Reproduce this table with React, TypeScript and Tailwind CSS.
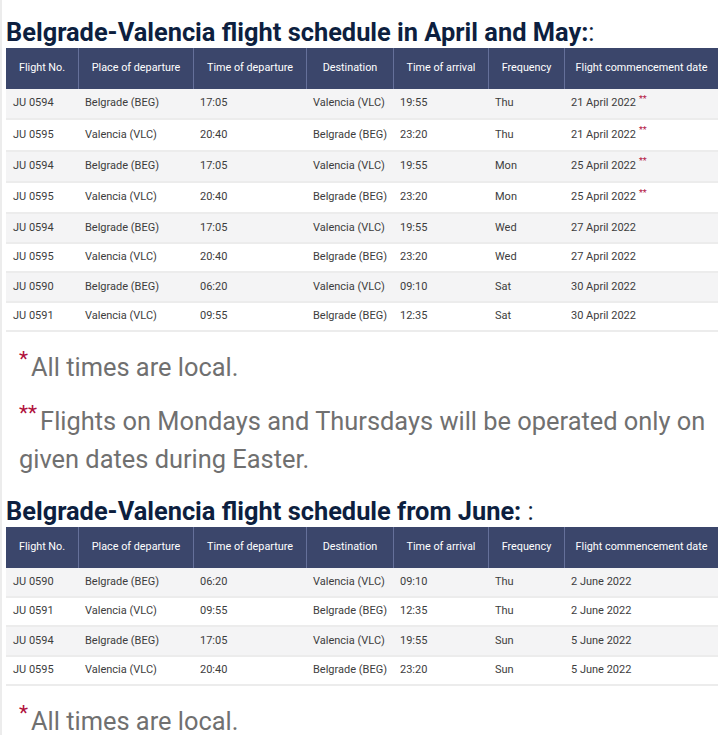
import React from "react";

type Flight = {
  no: string;
  from: string;
  dep: string;
  to: string;
  arr: string;
  freq: string;
  date: string;
  star?: boolean;
};

const BEG = "Belgrade (BEG)";
const VLC = "Valencia (VLC)";

const springFlights: Flight[] = [
  { no: "JU 0594", from: BEG, dep: "17:05", to: VLC, arr: "19:55", freq: "Thu", date: "21 April 2022", star: true },
  { no: "JU 0595", from: VLC, dep: "20:40", to: BEG, arr: "23:20", freq: "Thu", date: "21 April 2022", star: true },
  { no: "JU 0594", from: BEG, dep: "17:05", to: VLC, arr: "19:55", freq: "Mon", date: "25 April 2022", star: true },
  { no: "JU 0595", from: VLC, dep: "20:40", to: BEG, arr: "23:20", freq: "Mon", date: "25 April 2022", star: true },
  { no: "JU 0594", from: BEG, dep: "17:05", to: VLC, arr: "19:55", freq: "Wed", date: "27 April 2022" },
  { no: "JU 0595", from: VLC, dep: "20:40", to: BEG, arr: "23:20", freq: "Wed", date: "27 April 2022" },
  { no: "JU 0590", from: BEG, dep: "06:20", to: VLC, arr: "09:10", freq: "Sat", date: "30 April 2022" },
  { no: "JU 0591", from: VLC, dep: "09:55", to: BEG, arr: "12:35", freq: "Sat", date: "30 April 2022" },
];

const juneFlights: Flight[] = [
  { no: "JU 0590", from: BEG, dep: "06:20", to: VLC, arr: "09:10", freq: "Thu", date: "2 June 2022" },
  { no: "JU 0591", from: VLC, dep: "09:55", to: BEG, arr: "12:35", freq: "Thu", date: "2 June 2022" },
  { no: "JU 0594", from: BEG, dep: "17:05", to: VLC, arr: "19:55", freq: "Sun", date: "5 June 2022" },
  { no: "JU 0595", from: VLC, dep: "20:40", to: BEG, arr: "23:20", freq: "Sun", date: "5 June 2022" },
];

const columns = [
  { label: "Flight No.", w: "w-[72px]" },
  { label: "Place of departure", w: "w-[115px]" },
  { label: "Time of departure", w: "w-[113px]" },
  { label: "Destination", w: "w-[87px]" },
  { label: "Time of arrival", w: "w-[95px]" },
  { label: "Frequency", w: "w-[76px]" },
  { label: "Flight commencement date", w: "w-[154px]" },
];

function Heading({ title, tail }: { title: string; tail: string }) {
  return (
    <h2 className="pt-[17px] pb-px text-[25.4px] leading-[30px] text-[#0d1f3f]">
      <strong className="font-bold">{title}</strong>
      {tail}
    </h2>
  );
}

function ScheduleTable({ flights }: { flights: Flight[] }) {
  return (
    <table className="w-[712px] table-fixed border-separate border-spacing-0 text-[11px]">
      <colgroup>
        {columns.map((c) => (
          <col key={c.label} className={c.w} />
        ))}
      </colgroup>
      <thead>
        <tr>
          {columns.map((c, i) => (
            <th
              key={c.label}
              className={
                "h-[41px] bg-[#3b466b] px-1 text-center text-[10.8px] font-normal text-white " +
                (i > 0 ? "border-l border-[#65709a]" : "")
              }
            >
              {c.label}
            </th>
          ))}
        </tr>
      </thead>
      <tbody>
        {flights.map((f, i) => {
          const cells = [f.no, f.from, f.dep, f.to, f.arr, f.freq];
          return (
            <tr key={i} className={i % 2 === 0 ? "bg-[#f4f4f5]" : "bg-white"}>
              {cells.map((v, j) => (
                <td
                  key={j}
                  className={
                    "border-b-2 border-[#ececec] pl-[7px] text-[#3d3d3d] " +
                    (f.star ? "h-[31.25px]" : "h-[29.5px]")
                  }
                >
                  {v}
                </td>
              ))}
              <td className="border-b-2 border-[#ececec] pl-[7px] text-[#3d3d3d]">
                {f.date}
                {f.star && (
                  <sup className="ml-[3px] text-[9px] text-[#b3123f]">**</sup>
                )}
              </td>
            </tr>
          );
        })}
      </tbody>
    </table>
  );
}

function Note({ mark, children }: { mark: string; children: React.ReactNode }) {
  return (
    <p className="pl-[13px] text-[25.4px] leading-[38px] text-[#707070]">
      <sup className="mr-[3px] text-[21px] leading-none text-[#b0103c]">{mark}</sup>
      {children}
    </p>
  );
}

export default function App() {
  return (
    <div className="min-h-[735px] border-l-2 border-[#ececec] bg-white pl-1 font-['Roboto',sans-serif]">
      <Heading title="Belgrade-Valencia flight schedule in April and May:" tail=":" />
      <ScheduleTable flights={springFlights} />
      <div className="mt-4 flex flex-col gap-4">
        <Note mark="*">All times are local.</Note>
        <Note mark="**">
          Flights on Mondays and Thursdays will be operated only on given dates during Easter.
        </Note>
      </div>
      <div className="mt-px">
        <Heading title="Belgrade-Valencia flight schedule from June:" tail=" :" />
      </div>
      <ScheduleTable flights={juneFlights} />
      <div className="mt-4">
        <Note mark="*">All times are local.</Note>
      </div>
    </div>
  );
}
